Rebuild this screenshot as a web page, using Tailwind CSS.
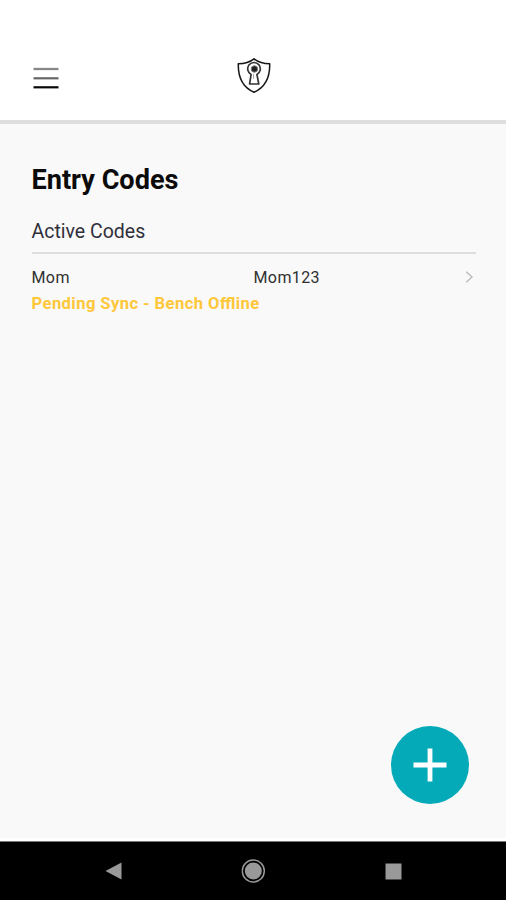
<!DOCTYPE html>
<html lang="en">
<head>
<meta charset="utf-8">
<title>Entry Codes</title>
<script src="https://cdn.jsdelivr.net/npm/@tailwindcss/browser@4"></script>
</head>
<body class="bg-[#f9f9f9]">
<div class="relative flex h-[900px] w-[506px] flex-col overflow-hidden bg-[#f9f9f9] font-['Roboto',sans-serif]">
  <header class="grid h-[124px] shrink-0 grid-cols-[1fr_36px_1fr] items-start border-b-4 border-[#dedede] bg-white pt-[57px]">
    <button class="ml-[33px] mt-[10px] w-[26px]" aria-label="Menu">
      <svg class="block" width="26" height="22" viewBox="0 0 26 22"><path d="M.5 2h25" stroke="#888" stroke-width="2.3"/><path d="M.5 11.3h25" stroke="#666" stroke-width="2.2"/><path d="M.5 20.3h25" stroke="#080808" stroke-width="2.2"/></svg>
    </button>
    <svg class="ml-px block" width="36" height="37" viewBox="0 0 36 37" fill="none" stroke="#151515" stroke-linejoin="round">
      <path d="M18 1.8C13.8 5.2 8.3 6.7 2.3 6.7C2 19.5 5.3 29.7 18 35.2C30.7 29.7 34 19.5 33.7 6.7C27.7 6.7 22.2 5.2 18 1.8Z" stroke-width="1.5"/>
      <path d="M15.1 17.4A6.3 6.3 0 1 1 20.9 17.4L22.8 27H13.6Z" stroke="#333" stroke-width="1.7"/>
      <circle cx="18.4" cy="12" r="3.2" fill="#202020" stroke="#777" stroke-width="1"/>
      <path d="M17.5 16.8v5" stroke="#aaa"/>
    </svg>
  </header>
  <main class="flex-1 pl-[31.5px] pr-[30px]">
    <h1 class="mt-[40px] text-[27.1px] font-bold leading-[32px] text-[#0b0b0b]">Entry Codes</h1>
    <h2 class="mt-[23px] h-[35px] border-b-2 border-[#dedede] text-[19.5px] leading-[26px] text-[#30303a]">Active Codes</h2>
    <div class="mt-[14px] flex h-5 items-center text-[16px] leading-5 tracking-[0.4px] text-[#303030]">
      <span class="w-[222px]">Mom</span>
      <span class="flex-1">Mom123</span>
      <svg class="mr-[2px] block -translate-y-px" width="9" height="14" viewBox="0 0 9 14"><path d="M1.3 1.7L7 7L1.3 12.3" fill="none" stroke="#bbb" stroke-width="1.4"/></svg>
    </div>
    <p class="mt-[6px] text-[16.6px] font-bold leading-5 tracking-[0.42px] text-[#ffc73a] [font-feature-settings:'liga'_1]">Pending Sync - Bench Offline</p>
  </main>
  <button class="absolute left-[391px] top-[726px] flex size-[78px] items-center justify-center rounded-full bg-[#04aab8]" aria-label="Add entry code">
    <svg width="34" height="34" viewBox="0 0 34 34"><path d="M17 .5v33M.5 17h33" stroke="#fff" stroke-width="4.8"/></svg>
  </button>
  <div class="h-[3px] shrink-0 bg-white"></div>
  <nav class="flex h-[59px] shrink-0 items-center justify-between border-t border-[#777] bg-black pl-[105px] pr-[104px]">
    <svg width="17" height="18" viewBox="0 0 17 18"><path d="M16.5.5v17L.5 9z" fill="#999"/></svg>
    <svg class="-translate-x-[0.7px]" width="24" height="24" viewBox="0 0 24 24"><circle cx="12" cy="12" r="11" fill="none" stroke="#999" stroke-width="1.5"/><circle cx="12" cy="12" r="8.5" fill="#999"/></svg>
    <svg width="17" height="17" viewBox="0 0 17 17"><path d="M.5.5h16v16H.5z" fill="#999"/></svg>
  </nav>
</div>
</body>
</html>
